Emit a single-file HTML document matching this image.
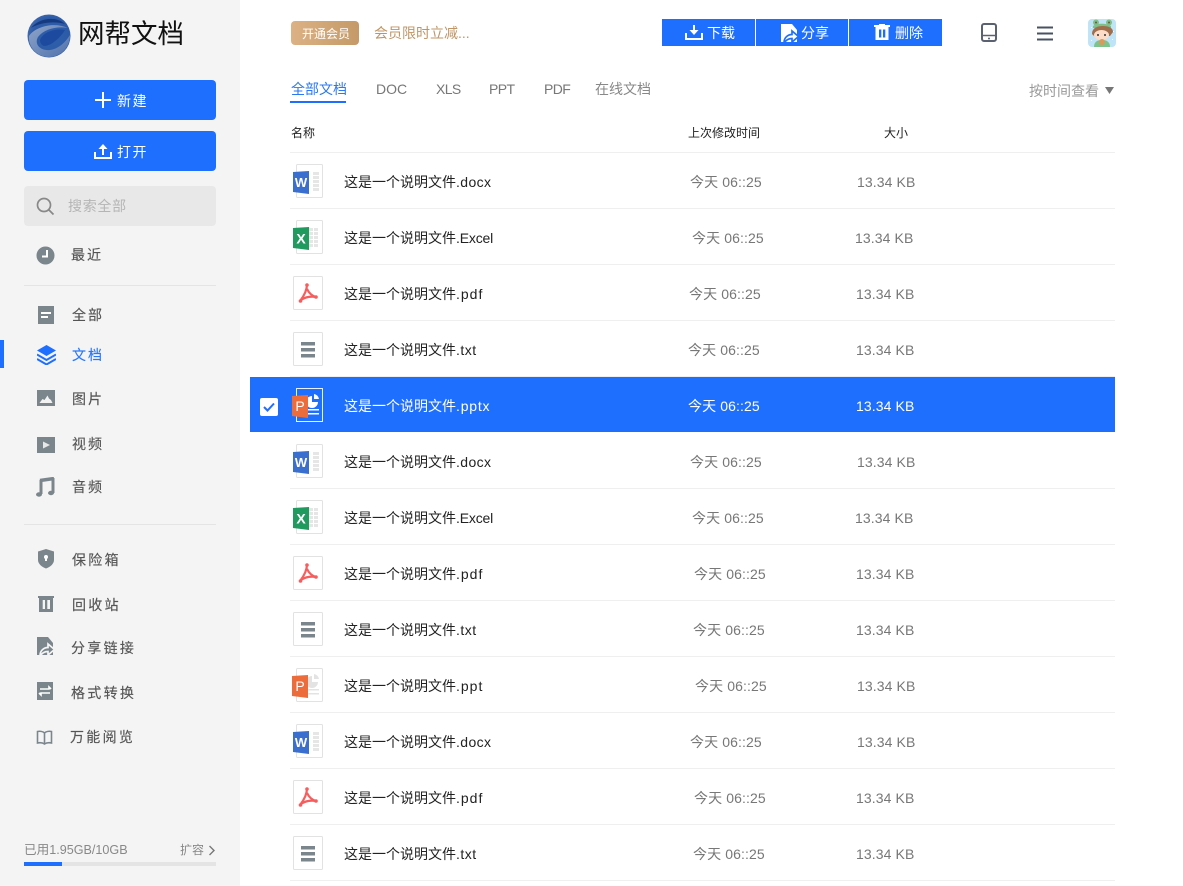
<!DOCTYPE html>
<html lang="zh"><head><meta charset="utf-8"><title>网帮文档</title>
<style>
*{box-sizing:border-box;margin:0;padding:0}
html,body{width:1183px;height:886px;overflow:hidden;background:#fff}
body{position:relative;font-family:"Liberation Sans","Noto Sans CJK SC",sans-serif}
.a,.t,svg.i{position:absolute}
.t{white-space:nowrap;line-height:20px}
#side{position:absolute;left:0;top:0;width:240px;height:886px;background:#f4f4f4}
.btn{position:absolute;left:24px;width:192px;height:40px;background:#1f6fff;border-radius:4px}
.nav{font-size:14px;color:#555;letter-spacing:2px;-webkit-text-stroke:.15px #555}
.ln{position:absolute;left:290px;width:825px;height:1px;background:#efefef}
.n{left:344px;font-size:14px;color:#222}
.d{font-size:14px;color:#777;letter-spacing:.1px}
.s{font-size:14px;color:#777;letter-spacing:.1px}
.tab{top:79px;font-size:14px;color:#777}
.th{top:123px;font-size:12px;color:#222}
.tb{position:absolute;top:19px;height:27px;background:#1f6fff}
.w{color:#fff!important}
.l1{letter-spacing:.4px}.l2{letter-spacing:-.17px}.l3{letter-spacing:1px}.l4{letter-spacing:.5px}.l5{letter-spacing:.8px}
</style></head><body>
<svg width="0" height="0" style="position:absolute"><defs>
<symbol id="doc" viewBox="0 0 32 36"><rect x="3.5" y=".5" width="26" height="33" rx="1" fill="#fff" stroke="#e2e2e2"/><path d="M20 8h6v3h-6zM20 12h6v3h-6zM20 16h6v3h-6zM20 20h6v3h-6zM20 24h6v3h-6z" fill="#e6e6e6"/><path d="M0 8 16 7v23L0 28z" fill="#3b6fcf"/><text x="8" y="23" font-size="13" font-weight="700" fill="#fff" text-anchor="middle" font-family="Liberation Sans">W</text></symbol>
<symbol id="xls" viewBox="0 0 32 36"><rect x="3.5" y=".5" width="26" height="33" rx="1" fill="#fff" stroke="#e2e2e2"/><path d="M16 8h4v3h-4zM21 8h4v3h-4zM16 12h4v3h-4zM21 12h4v3h-4zM16 16h4v3h-4zM21 16h4v3h-4zM16 20h4v3h-4zM21 20h4v3h-4zM16 24h4v3h-4zM21 24h4v3h-4z" fill="#e6e6e6"/><path d="M0 8 16 7v23L0 28z" fill="#219a5f"/><text x="8" y="23.500" font-size="14" font-weight="700" fill="#fff" text-anchor="middle" font-family="Liberation Sans">X</text></symbol>
<symbol id="pdf" viewBox="0 0 30 34"><rect x=".5" y=".5" width="29" height="33" rx="1" fill="#fff" stroke="#e2e2e2"/><path d="M14 8C14 14 11 20 7 25M14 13C16 17 19 20 23 21M8 24C12 21 18 20 23 21" fill="none" stroke="#f85c5c" stroke-width="2.200"/><circle cx="14" cy="9" r="1.800" fill="#f85c5c"/><circle cx="23" cy="21" r="1.800" fill="#f85c5c"/><circle cx="7.500" cy="25" r="1.800" fill="#f85c5c"/></symbol>
<symbol id="txt" viewBox="0 0 30 34"><rect x=".5" y=".5" width="29" height="33" rx="1" fill="#fff" stroke="#e2e2e2"/><path d="M8 10h14v3.500H8zM8 16h14v3.500H8zM8 22h14v3.500H8z" fill="#7b868c"/></symbol>
<symbol id="ppt" viewBox="0 0 32 36"><rect x="4.500" y=".5" width="26" height="33" rx="1" fill="#fff" stroke="#e2e2e2"/><path d="M20 8a6 6 0 1 0 6 6h-6zM22 6a6 6 0 0 1 5 5h-5zM16 21h11v1.500H16zM16 25h11v1.500H16z" fill="#e3e3e3"/><path d="M0 8 16 7v23L0 28z" fill="#ed6c3b"/><text x="8" y="23" font-size="14" fill="#fff" text-anchor="middle" font-family="Liberation Sans">P</text></symbol>
</defs></svg>

<div id="side"></div>
<svg class="i" style="left:27px;top:14px" width="44" height="44" viewBox="0 0 44 44"><defs><radialGradient id="gb" cx=".55" cy=".5" r=".6"><stop offset="0" stop-color="#2f60ad"/><stop offset=".7" stop-color="#2c5aa6"/><stop offset="1" stop-color="#466fb0"/></radialGradient><linearGradient id="gs" x1="0" y1="0" x2="1" y2="1"><stop offset="0" stop-color="#8ea4c8"/><stop offset="1" stop-color="#4f72ad"/></linearGradient></defs><circle cx="22" cy="22" r="21.500" fill="url(#gb)"/><path d="M4 14C11 5 28 1 38 10 28 7 14 8 4 14z" fill="#163a80"/><path d="M2 22C9 12 28 8 41 14 30 12 17 15 11 23 7 30 13 37 23 36 31 35 38 29 43 21 43 34 33 43 22 43 10 43 1 33 2 22z" fill="url(#gs)"/><path d="M13 26C16 18 28 14 38 16 33 24 25 31 18 32 15 32 13 29 13 26z" fill="#1d4a9e"/></svg>
<div class="t" style="left:78px;top:14px;font-size:26.500px;line-height:40px;color:#111">网帮文档</div>

<div class="btn" style="top:80px"></div>
<svg class="i" style="left:95px;top:92px" width="16" height="16"><path d="M8 0v16M0 8h16" stroke="#fff" stroke-width="2"/></svg>
<div class="t w" style="left:117px;top:91px;font-size:14px;letter-spacing:1.500px">新建</div>
<div class="btn" style="top:131px"></div>
<svg class="i" style="left:94px;top:143px" width="18" height="16"><path d="M1 9v6h16V9" fill="none" stroke="#fff" stroke-width="2"/><path d="M9 1 4.500 6H8v6h2V6h3.500z" fill="#fff"/></svg>
<div class="t w" style="left:117px;top:142px;font-size:14px;letter-spacing:1.500px">打开</div>
<div class="a" style="left:24px;top:186px;width:192px;height:40px;background:#e8e8e8;border-radius:4px"></div>
<svg class="i" style="left:36px;top:197px" width="19" height="19"><circle cx="8" cy="8" r="6.500" fill="none" stroke="#888" stroke-width="1.700"/><path d="m13 13 4.500 4.500" stroke="#888" stroke-width="1.800"/></svg>
<div class="t" style="left:68px;top:196px;font-size:14px;letter-spacing:.7px;color:#b5b5b5">搜索全部</div>

<svg class="i" style="left:36px;top:246px" width="19" height="19"><circle cx="9.500" cy="9.500" r="9" fill="#7b868c"/><path d="M11 4v6.500H6" fill="none" stroke="#fff" stroke-width="2"/></svg>
<div class="t nav" style="left:71px;top:245px">最近</div>
<div class="a" style="left:24px;top:285px;width:192px;height:1px;background:#e4e4e4"></div>

<svg class="i" style="left:38px;top:306px" width="16" height="18"><rect width="16" height="18" fill="#7b868c"/><path d="M3 6h10v2H3zM3 10h7v2H3z" fill="#fff"/></svg>
<div class="t nav" style="left:72px;top:305px">全部</div>
<div class="a" style="left:0;top:340px;width:4px;height:28px;background:#1f6fff"></div>
<svg class="i" style="left:37px;top:345px" width="19" height="20"><path d="M9.500 0 19 5.500 9.500 11 0 5.500z" fill="#1f6fff"/><path d="m0 9.500 9.500 5.500L19 9.500M0 14l9.500 5.500L19 14" fill="none" stroke="#1f6fff" stroke-width="2"/></svg>
<div class="t nav" style="left:72px;top:345px;color:#2a78f6;-webkit-text-stroke:.15px #2a78f6">文档</div>
<svg class="i" style="left:37px;top:390px" width="18" height="16"><rect width="18" height="16" fill="#7b868c"/><path d="M2.500 13l3-4 2 1 3-4.500 1.500 3 2 1.500 1.500 3z" fill="#f2f2f2"/></svg>
<div class="t nav" style="left:72px;top:389px">图片</div>
<svg class="i" style="left:37px;top:437px" width="18" height="16"><rect width="18" height="16" fill="#7b868c"/><path d="M6 4.500 13 8l-7 3.500z" fill="#e8e8e8"/></svg>
<div class="t nav" style="left:72px;top:434px">视频</div>
<svg class="i" style="left:36px;top:477px" width="19" height="20"><path d="M4 3.500 18 1.500" stroke="#7b868c" stroke-width="3.500"/><path d="M5 3v14M17 1v15" stroke="#7b868c" stroke-width="3"/><ellipse cx="3" cy="17.500" rx="3" ry="2.200" fill="#7b868c"/><ellipse cx="15" cy="16" rx="3" ry="2.200" fill="#7b868c"/></svg>
<div class="t nav" style="left:72px;top:477px">音频</div>
<div class="a" style="left:24px;top:524px;width:192px;height:1px;background:#e4e4e4"></div>

<svg class="i" style="left:38px;top:549px" width="16" height="20"><path d="M8 0 16 2.500V11c0 4-4 7-8 8.500C4 18 0 15 0 11V2.500z" fill="#7b868c"/><circle cx="8" cy="8" r="2" fill="#fff"/><path d="M7 8h2v4H7z" fill="#fff"/></svg>
<div class="t nav" style="left:72px;top:550px;letter-spacing:2.300px">保险箱</div>
<svg class="i" style="left:38px;top:596px" width="16" height="16"><path d="M0 0h16v2H0z" fill="#7b868c"/><path d="M1 2h14v14H1z" fill="#7b868c"/><path d="M4.700 4h2.300v9H4.700zM9.300 4H12v9H9.300z" fill="#f4f4f4"/></svg>
<div class="t nav" style="left:72px;top:595px;letter-spacing:2.300px">回收站</div>
<svg class="i" style="left:37px;top:637px;overflow:visible" width="17" height="18"><path d="M0 0h11l5 6v12H0z" fill="#7b868c"/><path d="M3 18.500c0-4.500 3.500-8 8-8V7l6.500 5.500-6.500 5.500v-3.500c-3 0-6 1.500-8 4.500z" fill="#7b868c" stroke="#f4f4f4" stroke-width="1.700"/></svg>
<div class="t nav" style="left:71px;top:638px;letter-spacing:2.300px">分享链接</div>
<svg class="i" style="left:37px;top:682px" width="16" height="18"><rect width="16" height="18" fill="#7b868c"/><path d="M3 7h9V5l2 2M13 11H4v2l-2-2" fill="none" stroke="#fff" stroke-width="1.600"/></svg>
<div class="t nav" style="left:71px;top:683px;letter-spacing:2.300px">格式转换</div>
<svg class="i" style="left:36px;top:730px" width="17" height="15"><path d="M8.500 3C7 1.500 4 1 1.500 1.500V13c2.500-.5 5.500 0 7 1 1.500-1 4.500-1.500 7-1V1.500C13 1 10 1.500 8.500 3zv11" fill="none" stroke="#7b868c" stroke-width="1.600"/></svg>
<div class="t nav" style="left:70px;top:727px;letter-spacing:2.300px">万能阅览</div>

<div class="t" style="left:24px;top:840px;font-size:12.600px;color:#888">已用1.95GB/10GB</div>
<div class="t" style="left:180px;top:840px;font-size:12px;color:#888">扩容</div>
<svg class="i" style="left:208px;top:845px" width="8" height="11"><path d="m1.500 1 4.500 4.500L1.500 10" fill="none" stroke="#777" stroke-width="1.400"/></svg>
<div class="a" style="left:24px;top:862px;width:192px;height:4px;background:#e4e4e4"></div>
<div class="a" style="left:24px;top:862px;width:38px;height:4px;background:#1f6fff"></div>

<div class="a" style="left:291px;top:21px;width:68px;height:24px;border-radius:4px;background:linear-gradient(90deg,#dcb285,#c59a68)"></div>
<div class="t w" style="left:302px;top:24px;font-size:12px;line-height:20px">开通会员</div>
<div class="t" style="left:374px;top:23px;font-size:14px;color:#c09565">会员限时立减...</div>

<div class="tb" style="left:662px;width:93px"></div>
<div class="tb" style="left:756px;width:92px"></div>
<div class="tb" style="left:849px;width:93px"></div>
<svg class="i" style="left:685px;top:25px" width="18" height="15"><path d="M1 8v6h16V8" fill="none" stroke="#fff" stroke-width="2"/><path d="M8 0h2v5h3.500L9 10 4.500 5H8z" fill="#fff"/></svg>
<div class="t w" style="left:707px;top:23px;font-size:14px">下载</div>
<svg class="i" style="left:781px;top:24px;overflow:visible" width="17" height="18"><path d="M0 0h11l5 6v12H0z" fill="#fff"/><path d="M3 18.500c0-4.500 3.500-8 8-8V7l6.500 5.500-6.500 5.500v-3.500c-3 0-6 1.500-8 4.500z" fill="#fff" stroke="#1f6fff" stroke-width="1.700"/></svg>
<div class="t w" style="left:801px;top:23px;font-size:14px">分享</div>
<svg class="i" style="left:874px;top:24px" width="16" height="16"><path d="M0 1h16v2H0zM5 0h6v1H5z" fill="#fff"/><path d="M1.500 3h13v13h-13z" fill="#fff"/><path d="M5 5.500h2.300v8H5zM9 5.500h2.300v8H9z" fill="#1f6fff"/></svg>
<div class="t w" style="left:895px;top:23px;font-size:14px">删除</div>

<svg class="i" style="left:981px;top:23px" width="16" height="19"><rect x="1" y="1" width="14" height="17" rx="2" fill="none" stroke="#5a6170" stroke-width="2"/><path d="M1 12.500h14" stroke="#5a6170" stroke-width="1.500"/><circle cx="8" cy="15.500" r="1" fill="#5a6170"/></svg>
<svg class="i" style="left:1037px;top:26px" width="16" height="15"><path d="M0 1.500h16M0 7.500h16M0 13.500h16" stroke="#4a5260" stroke-width="2"/></svg>
<svg class="i" style="left:1088px;top:19px" width="28" height="28" viewBox="0 0 28 28"><rect width="28" height="28" rx="4" fill="#bfe3f7"/><path d="M3 8h1v1H3zM24 20h1v1h-1zM3 21h1v1H3zM25 12h1v1h-1z" fill="#fff"/><circle cx="8" cy="3.500" r="3" fill="#7ec08a"/><circle cx="21" cy="3.500" r="3" fill="#7ec08a"/><circle cx="8" cy="3.500" r="1" fill="#6a5a3a"/><circle cx="21" cy="3.500" r="1" fill="#6a5a3a"/><path d="M5 7C9 4 19 4 23 7v2H5z" fill="#7ec08a"/><path d="M4 15C4 9 9 7 15 7c6 0 10 2 10 6l-3 4-16 0z" fill="#a06e4c"/><ellipse cx="13.500" cy="16" rx="7.500" ry="5" fill="#fcdcc6"/><path d="M6 28c0-5 3-7 8-7s8 2 8 7z" fill="#7dc48c"/><circle cx="14" cy="23" r="3" fill="#d99a5b"/><circle cx="10" cy="16" r="1" fill="#333"/><circle cx="17" cy="16" r="1" fill="#333"/></svg>

<div class="t tab" style="left:291px;color:#2a78f6">全部文档</div>
<div class="a" style="left:290px;top:101px;width:56px;height:2px;background:#1f6fff"></div>
<div class="t tab" style="left:376px">DOC</div>
<div class="t tab" style="left:436px;letter-spacing:-.6px">XLS</div>
<div class="t tab" style="left:489px;letter-spacing:-.6px">PPT</div>
<div class="t tab" style="left:544px;letter-spacing:-.6px">PDF</div>
<div class="t tab" style="left:595px;color:#888">在线文档</div>
<div class="t" style="left:1029px;top:81px;font-size:14px;color:#999">按时间查看</div>
<svg class="i" style="left:1105px;top:87px" width="9" height="7"><path d="M0 0h9L4.500 7z" fill="#777"/></svg>

<div class="t th" style="left:291px">名称</div>
<div class="t th" style="left:688px">上次修改时间</div>
<div class="t th" style="left:884px">大小</div>

<div class="a" style="left:250px;top:377px;width:865px;height:55px;background:#1f6fff"></div>
<div class="a" style="left:260px;top:398px;width:18px;height:18px;background:#fff;border-radius:2px"></div>
<svg class="i" style="left:263px;top:402px" width="12" height="10"><path d="m1 5 3.500 3.500L11 1.500" fill="none" stroke="#1f6fff" stroke-width="2"/></svg>

<div class="ln" style="top:152px"></div><div class="ln" style="top:208px"></div><div class="ln" style="top:264px"></div><div class="ln" style="top:320px"></div><div class="ln" style="top:376px"></div><div class="ln" style="top:488px"></div><div class="ln" style="top:544px"></div><div class="ln" style="top:600px"></div><div class="ln" style="top:656px"></div><div class="ln" style="top:712px"></div><div class="ln" style="top:768px"></div><div class="ln" style="top:824px"></div><div class="ln" style="top:880px"></div>

<svg class="i" style="left:293px;top:164px" width="32" height="36"><use href="#doc"/></svg>
<div class="t n" style="top:172px">这是一个说明文件<span class="l1">.docx</span></div><div class="t d" style="left:690px;top:172px">今天 06::25</div><div class="t s" style="left:857px;top:172px">13.34 KB</div>
<svg class="i" style="left:293px;top:220px" width="32" height="36"><use href="#xls"/></svg>
<div class="t n" style="top:228px">这是一个说明文件<span class="l2">.Excel</span></div><div class="t d" style="left:692px;top:228px">今天 06::25</div><div class="t s" style="left:855px;top:228px">13.34 KB</div>
<svg class="i" style="left:293px;top:276px" width="30" height="34"><use href="#pdf"/></svg>
<div class="t n" style="top:284px">这是一个说明文件<span class="l3">.pdf</span></div><div class="t d" style="left:689px;top:284px">今天 06::25</div><div class="t s" style="left:856px;top:284px">13.34 KB</div>
<svg class="i" style="left:293px;top:332px" width="30" height="34"><use href="#txt"/></svg>
<div class="t n" style="top:340px">这是一个说明文件<span class="l4">.txt</span></div><div class="t d" style="left:688px;top:340px">今天 06::25</div><div class="t s" style="left:856px;top:340px">13.34 KB</div>
<svg class="i" style="left:292px;top:388px" width="32" height="36" viewBox="0 0 32 36"><rect x="4.500" y=".5" width="26" height="33" fill="#1f6fff" stroke="#e8efff"/><path d="M20 8a6 6 0 1 0 6 6h-6zM22 6a6 6 0 0 1 5 5h-5zM16 21h11v1.500H16zM16 25h11v1.500H16z" fill="#fff"/><path d="M0 8 16 7v23L0 28z" fill="#ed6c3b"/><text x="8" y="23" font-size="14" fill="#fff" text-anchor="middle" font-family="Liberation Sans">P</text></svg>
<div class="t n w" style="top:396px">这是一个说明文件<span class="l5">.pptx</span></div><div class="t d w" style="left:688px;top:396px">今天 06::25</div><div class="t s w" style="left:856px;top:396px">13.34 KB</div>
<svg class="i" style="left:293px;top:444px" width="32" height="36"><use href="#doc"/></svg>
<div class="t n" style="top:452px">这是一个说明文件<span class="l1">.docx</span></div><div class="t d" style="left:690px;top:452px">今天 06::25</div><div class="t s" style="left:857px;top:452px">13.34 KB</div>
<svg class="i" style="left:293px;top:500px" width="32" height="36"><use href="#xls"/></svg>
<div class="t n" style="top:508px">这是一个说明文件<span class="l2">.Excel</span></div><div class="t d" style="left:692px;top:508px">今天 06::25</div><div class="t s" style="left:855px;top:508px">13.34 KB</div>
<svg class="i" style="left:293px;top:556px" width="30" height="34"><use href="#pdf"/></svg>
<div class="t n" style="top:564px">这是一个说明文件<span class="l3">.pdf</span></div><div class="t d" style="left:694px;top:564px">今天 06::25</div><div class="t s" style="left:856px;top:564px">13.34 KB</div>
<svg class="i" style="left:293px;top:612px" width="30" height="34"><use href="#txt"/></svg>
<div class="t n" style="top:620px">这是一个说明文件<span class="l4">.txt</span></div><div class="t d" style="left:693px;top:620px">今天 06::25</div><div class="t s" style="left:856px;top:620px">13.34 KB</div>
<svg class="i" style="left:292px;top:668px" width="32" height="36"><use href="#ppt"/></svg>
<div class="t n" style="top:676px">这是一个说明文件<span class="l3">.ppt</span></div><div class="t d" style="left:695px;top:676px">今天 06::25</div><div class="t s" style="left:857px;top:676px">13.34 KB</div>
<svg class="i" style="left:293px;top:724px" width="32" height="36"><use href="#doc"/></svg>
<div class="t n" style="top:732px">这是一个说明文件<span class="l1">.docx</span></div><div class="t d" style="left:690px;top:732px">今天 06::25</div><div class="t s" style="left:857px;top:732px">13.34 KB</div>
<svg class="i" style="left:293px;top:780px" width="30" height="34"><use href="#pdf"/></svg>
<div class="t n" style="top:788px">这是一个说明文件<span class="l3">.pdf</span></div><div class="t d" style="left:694px;top:788px">今天 06::25</div><div class="t s" style="left:856px;top:788px">13.34 KB</div>
<svg class="i" style="left:293px;top:836px" width="30" height="34"><use href="#txt"/></svg>
<div class="t n" style="top:844px">这是一个说明文件<span class="l4">.txt</span></div><div class="t d" style="left:693px;top:844px">今天 06::25</div><div class="t s" style="left:856px;top:844px">13.34 KB</div>
</body></html>
